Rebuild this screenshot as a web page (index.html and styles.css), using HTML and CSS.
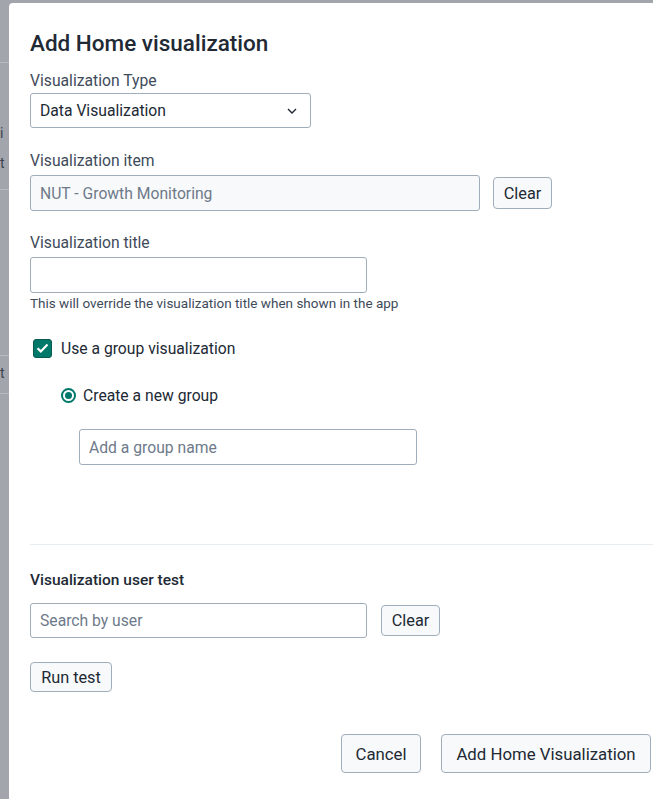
FILE: index.html
```html
<!DOCTYPE html>
<html lang="en">
<head>
<meta charset="utf-8">
<title>Add Home visualization</title>
<link rel="stylesheet" href="styles.css">
</head>
<body>
<div class="screen">
  <div class="backdrop-strip">
    <div class="bg-line l1"></div>
    <div class="bg-text t1">i</div>
    <div class="bg-text t2">t</div>
    <div class="bg-line l2"></div>
    <div class="bg-line l3"></div>
    <div class="bg-text t3">t</div>
    <div class="bg-line l4"></div>
  </div>
  <div class="modal">
    <h1 class="title">Add Home visualization</h1>

    <div class="field f-type">
      <div class="label">Visualization Type</div>
      <div class="select">
        <span>Data Visualization</span>
        <svg class="chevron" width="10" height="6" viewBox="0 0 10 6"><path d="M1 1l4 4 4-4" fill="none" stroke="#212934" stroke-width="1.4"/></svg>
      </div>
    </div>

    <div class="field f-item">
      <div class="label">Visualization item</div>
      <div class="row">
        <div class="input disabled w-item">NUT - Growth Monitoring</div>
        <button class="btn small">Clear</button>
      </div>
    </div>

    <div class="field f-title">
      <div class="label">Visualization title</div>
      <div class="input w-title"></div>
      <div class="help">This will override the visualization title when shown in the app</div>
    </div>

    <div class="check-row">
      <span class="checkbox">
        <svg width="13" height="10" viewBox="0 0 13 10"><path d="M1.5 5.2l3.3 3.2L11.5 1.6" fill="none" stroke="#fff" stroke-width="2.2"/></svg>
      </span>
      <span class="check-label">Use a group visualization</span>
    </div>

    <div class="radio-row">
      <span class="radio"><span class="dot"></span></span>
      <span class="check-label">Create a new group</span>
    </div>

    <div class="input placeholder w-group">Add a group name</div>

    <hr class="divider">

    <div class="section-title">Visualization user test</div>
    <div class="row row-search">
      <div class="input placeholder w-search">Search by user</div>
      <button class="btn small">Clear</button>
    </div>
    <button class="btn run">Run test</button>

    <div class="footer">
      <button class="btn large w-cancel">Cancel</button>
      <button class="btn large w-add">Add Home Visualization</button>
    </div>
  </div>
</div>
</body>
</html>
```
FILE: styles.css
```css
* { box-sizing: border-box; }
html, body {
  margin: 0;
  padding: 0;
  width: 653px;
  height: 799px;
  overflow: hidden;
  background: #a2a6ac;
  font-family: Roboto, "Liberation Sans", sans-serif;
  color: #212934;
}
.screen {
  display: flex;
  align-items: flex-start;
  height: 799px;
}
.backdrop-strip {
  position: relative;
  width: 9px;
  flex: none;
  height: 799px;
}
.bg-line {
  position: absolute;
  left: 0;
  width: 9px;
  height: 1px;
  background: #b8bcc2;
}
.l1 { top: 62px; }
.l2 { top: 189px; }
.l3 { top: 355px; }
.l4 { top: 393px; }
.bg-text {
  position: absolute;
  left: 0;
  font-size: 14px;
  line-height: 16px;
  color: #3b4350;
}
.t1 { top: 125px; }
.t2 { top: 155px; }
.t3 { top: 365px; }

.modal {
  flex: none;
  width: 663px;
  height: 820px;
  margin-top: 3px;
  background: #fff;
  border-radius: 4px;
  padding: 27px 21px 0 21px;
  display: flex;
  flex-direction: column;
  align-items: flex-start;
}
.title {
  margin: 0 0 15px 0;
  font-size: 22.5px;
  line-height: 26px;
  font-weight: 500;
  color: #212934;
}
.label {
  font-size: 15.7px;
  line-height: 19px;
  color: #404b5a;
  margin-bottom: 3px;
}
.field { display: flex; flex-direction: column; }
.f-type { margin-bottom: 23px; }
.f-item { margin-bottom: 22px; }
.f-item .label { margin-bottom: 5px; }
.f-title .label { margin-bottom: 5px; }
.row { display: flex; align-items: center; }
.select {
  width: 281px;
  height: 35px;
  border: 1px solid #a0adba;
  border-radius: 3px;
  display: flex;
  align-items: center;
  justify-content: space-between;
  padding: 0 13px 0 9px;
  font-size: 15.7px;
  color: #212934;
  background: #fff;
}
.input {
  height: 36px;
  border: 1px solid #a0adba;
  border-radius: 3px;
  display: flex;
  align-items: center;
  padding: 0 9px;
  font-size: 15.7px;
  background: #fff;
  color: #212934;
}
.input.disabled {
  background: #f8f9fa;
  color: #6e7a8a;
}
.input.placeholder { color: #6e7a8a; }
.w-item { width: 450px; }
.w-title { width: 337px; }
.w-group { width: 338px; margin-left: 49px; }
.w-search { width: 337px; height: 35px; }
.help {
  font-size: 13.5px;
  line-height: 16px;
  color: #404b5a;
  margin-top: 2px;
}
.btn {
  font-family: inherit;
  font-size: 16.3px;
  color: #212934;
  background: #f8f9fa;
  border: 1px solid #a0adba;
  border-radius: 4px;
  padding: 0;
  display: flex;
  align-items: center;
  justify-content: center;
}
.btn.small { width: 59px; height: 32px; margin-left: 13px; }
.row-search .btn.small { height: 31px; margin-left: 14px; }
.check-row {
  display: flex;
  align-items: center;
  margin-top: 27px;
  margin-left: 3px;
  height: 20px;
}
.checkbox {
  width: 19px;
  height: 19px;
  border-radius: 3px;
  background: #00796b;
  border: 1px solid #0b5a50;
  display: flex;
  align-items: center;
  justify-content: center;
  margin-right: 9px;
}
.check-label {
  font-size: 15.7px;
  line-height: 19px;
  color: #212934;
}
.radio-row {
  display: flex;
  align-items: center;
  margin-top: 27px;
  margin-left: 31px;
  height: 20px;
}
.radio {
  width: 15px;
  height: 15px;
  border: 2px solid #00796b;
  border-radius: 50%;
  display: flex;
  align-items: center;
  justify-content: center;
  margin-right: 7px;
}
.radio .dot {
  width: 7px;
  height: 7px;
  border-radius: 50%;
  background: #00796b;
}
.w-group { margin-top: 24px; }
.divider {
  width: 623px;
  margin: 79px 0 0 0;
  border: 0;
  border-top: 1px solid #e8edf2;
}
.section-title {
  margin-top: 26px;
  font-size: 15.5px;
  line-height: 19px;
  font-weight: 500;
  color: #212934;
}
.row-search { margin-top: 13px; }
.btn.run { width: 82px; height: 30px; margin-top: 24px; }
.footer {
  align-self: stretch;
  display: flex;
  justify-content: flex-end;
  gap: 20px;
  margin-top: 42px;
}
.btn.large { height: 39px; font-size: 16.8px; }
.w-cancel { width: 80px; }
.w-add { width: 210px; }
```
